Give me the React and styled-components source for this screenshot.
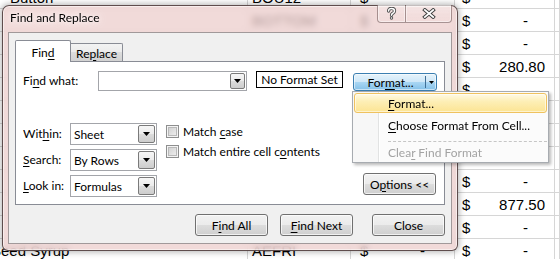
import React from 'react';
import styled, { createGlobalStyle, css } from 'styled-components';

const GlobalStyle = createGlobalStyle`
  html, body { margin: 0; padding: 0; background: #ffffff; }
  body { overflow: hidden; }
  *, *::before, *::after { box-sizing: border-box; }
`;

const UI_FONT = `Lato, "Liberation Sans", Arial, sans-serif`;

const Page = styled.div`
  position: relative;
  width: 560px;
  height: 259px;
  overflow: hidden;
  background: #fff;
`;

/* ---------- spreadsheet behind the dialog ---------- */
const Sheet = styled.div`
  display: flex;
  flex-direction: column;
  margin-top: -14px;
  font-family: "Liberation Sans", Arial, sans-serif;
  font-size: 15px;
  color: #000;
`;

const SheetRow = styled.div`
  flex: none;
  display: grid;
  grid-template-columns: 248px 103px 104px 100px 1fr;
  height: 23px;
  border-bottom: 1px solid #d6d6d6;
`;

const Cell = styled.div`
  display: flex;
  align-items: center;
  border-right: 1px solid #d6d6d6;
  padding-left: ${p => p.$pl ?? 4}px;
  white-space: nowrap;
  overflow: hidden;
`;

const ShiftedText = styled.span`
  margin-left: ${p => p.$shift}px;
`;

const MoneyCell = styled(Cell)`
  justify-content: space-between;
  padding-right: ${p => p.$pr}px;
`;

const Amount = styled.span`
  padding-right: ${p => (p.$dash ? 17 : 0)}px;
`;

/* ---------- dialog window ---------- */
const Window = styled.div`
  position: absolute;
  left: 2px;
  top: 5px;
  width: 456px;
  height: 246px;
  display: flex;
  flex-direction: column;
  padding: 0 5px 6px;
  border: 1px solid rgba(55, 38, 38, 0.78);
  border-radius: 7px 7px 6px 6px;
  background: rgba(236, 205, 204, 0.74);
  backdrop-filter: blur(3px);
  box-shadow: inset 0 0 0 1px rgba(255, 255, 255, 0.5), 0 0 6px 1px rgba(0, 0, 0, 0.3);
  font-family: ${UI_FONT};
  font-size: 12px;
  color: #000;
`;

const TitleBar = styled.div`
  flex: none;
  height: 26px;
  display: flex;
  justify-content: space-between;
  align-items: flex-start;
  padding-left: 2px;
`;

const Title = styled.div`
  margin-top: 4px;
  line-height: 15px;
  font-size: 12px;
  text-shadow: 0 0 5px rgba(255, 255, 255, 0.9), 0 0 8px rgba(255, 255, 255, 0.8);
`;

const CaptionGroup = styled.div`
  display: flex;
  margin-top: -1px;
`;

const CaptionButton = styled.div`
  width: ${p => p.$w}px;
  height: 18px;
  display: flex;
  align-items: center;
  justify-content: center;
  border: 1px solid rgba(90, 65, 65, 0.5);
  border-top: none;
  background: linear-gradient(rgba(255, 255, 255, 0.35), rgba(255, 255, 255, 0.12) 55%, rgba(255, 255, 255, 0.05));
  box-shadow: inset 0 0 0 1px rgba(255, 255, 255, 0.45);
  ${p => p.$first
    ? css`border-right: none; border-radius: 0 0 0 4px;`
    : css`border-radius: 0 0 4px 0;`}
`;

const ClientArea = styled.div`
  flex: none;
  height: 212px;
  display: flex;
  flex-direction: column;
  padding: 7px 6px 0;
  border: 1px solid #a1999a;
  background: #f0f0f0;
`;

const TabStrip = styled.div`
  flex: none;
  height: 21px;
  display: flex;
  align-items: flex-end;
`;

const Tab = styled.div`
  flex: none;
  display: flex;
  align-items: center;
  justify-content: center;
  border: 1px solid #898c95;
  border-bottom: none;
  ${p => p.$active
    ? css`
        width: 56px;
        height: 22px;
        margin-bottom: -1px;
        padding-top: 1px;
        background: #fff;
        position: relative;
        z-index: 1;
        border-radius: 2px 2px 0 0;
      `
    : css`
        width: 52px;
        height: 18px;
        padding-top: 1px;
        border-left: none;
        border-radius: 0 2px 0 0;
        background: linear-gradient(#f3f3f3, #ebebeb 50%, #dddddd 50%, #d2d2d2);
      `}
`;

const Panel = styled.div`
  flex: none;
  height: 144px;
  display: flex;
  flex-direction: column;
  padding: 9px 0 7px 7px;
  border: 1px solid #898c95;
  background: #fff;
`;

const FindRow = styled.div`
  flex: none;
  display: flex;
  align-items: flex-start;
`;

const Label = styled.div`
  flex: none;
  width: ${p => p.$w}px;
  line-height: ${p => p.$h}px;
  white-space: nowrap;
`;

const Text = styled.span`
  white-space: pre;
`;

const Key = styled.span`
  text-decoration: underline;
  text-underline-offset: 2px;
`;

const Combo = styled.div`
  flex: none;
  width: ${p => p.$w}px;
  height: ${p => p.$h}px;
  display: flex;
  align-items: stretch;
  padding: 1px;
  border: 1px solid #a3a5aa;
  background: #fff;
`;

const ComboValue = styled.div`
  flex: 1;
  display: flex;
  align-items: center;
  padding-left: 2px;
  white-space: nowrap;
`;

const DropButton = styled.div`
  flex: none;
  width: ${p => p.$w}px;
  display: flex;
  align-items: center;
  justify-content: center;
  border: 1px solid #7a7a7a;
  border-radius: 2px;
  background: linear-gradient(#f6f6f6, #ebebeb 50%, #dcdcdc 50%, #cdcdcd);
`;

const FormatBox = styled.div`
  flex: none;
  width: 87px;
  height: 17px;
  margin-left: 9px;
  display: flex;
  align-items: center;
  justify-content: center;
  border: 1px solid #000;
  background: #fff;
  white-space: nowrap;
`;

const SplitButton = styled.div`
  flex: none;
  width: 84px;
  height: 18px;
  margin-left: 10px;
  margin-top: 2px;
  display: flex;
  border: 1px solid #3c7fb1;
  border-radius: 3px;
  background: linear-gradient(#e6f3fb 0%, #cfe8f8 48%, #a9d6f3 52%, #84c1e9 100%);
  box-shadow: inset 0 0 0 1px rgba(255, 255, 255, 0.55);
`;

const SplitMain = styled.div`
  flex: 1;
  display: flex;
  align-items: center;
  justify-content: center;
  padding-left: 2px;
`;

const SplitDivider = styled.div`
  flex: none;
  width: 1px;
  margin: 2px 0;
  background: #3f6f95;
`;

const SplitArrow = styled.div`
  flex: none;
  width: 10px;
  display: flex;
  align-items: center;
  justify-content: center;
`;

const Lower = styled.div`
  margin-top: auto;
  display: flex;
  align-items: flex-end;
`;

const SelectColumn = styled.div`
  display: flex;
  flex-direction: column;
  gap: 4px;
`;

const FieldRow = styled.div`
  display: flex;
  align-items: center;
  height: 22px;
`;

const CheckColumn = styled.div`
  align-self: flex-start;
  margin-top: 2px;
  margin-left: 9px;
  display: flex;
  flex-direction: column;
  gap: 7px;
`;

const CheckRow = styled.div`
  display: flex;
  align-items: center;
  gap: 4px;
  height: 13px;
  white-space: nowrap;
`;

const CheckBox = styled.span`
  flex: none;
  width: 13px;
  height: 13px;
  border: 1px solid #8e8f8f;
  background: linear-gradient(135deg, #cbcbcb, #f4f4f4);
  box-shadow: inset 0 0 0 1px #f4f4f4, inset 0 0 0 2px #b9b9b9;
`;

const PushButton = styled.div`
  flex: none;
  width: ${p => p.$w ?? 73}px;
  height: 22px;
  display: flex;
  align-items: center;
  justify-content: center;
  border: 1px solid #707070;
  border-radius: 3px;
  background: linear-gradient(#f2f2f2 0%, #ebebeb 50%, #dddddd 50%, #cfcfcf 100%);
  box-shadow: inset 0 0 0 1px rgba(255, 255, 255, 0.7);
  white-space: nowrap;
`;

const OptionsButton = styled(PushButton)`
  margin-left: auto;
  margin-right: 8px;
  margin-bottom: 2px;
`;

const ButtonRow = styled.div`
  flex: none;
  margin-top: 9px;
  display: flex;
  justify-content: flex-end;
`;

const Gap = styled.div`
  flex: none;
  width: ${p => p.$w}px;
`;

/* ---------- dropdown menu ---------- */
const Menu = styled.div`
  position: absolute;
  left: 352px;
  top: 91px;
  width: 197px;
  height: 72px;
  display: flex;
  flex-direction: column;
  padding-bottom: 1px;
  border: 1px solid #a7abb0;
  background: linear-gradient(to right, #f7f7f7 25px, #e2e3e3 25px, #e2e3e3 26px, #ffffff 26px, #ffffff 27px, #fbfbfb 27px);
  box-shadow: 2px 2px 3px rgba(0, 0, 0, 0.28);
  font-family: ${UI_FONT};
  font-size: 12px;
`;

const MenuItem = styled.div`
  flex: none;
  height: ${p => p.$h}px;
  margin: ${p => p.$m};
  padding-left: 33px;
  display: flex;
  align-items: center;
  border: 1px solid transparent;
  border-radius: 3px;
  white-space: nowrap;
  color: ${p => (p.$disabled ? '#a3a3a3' : '#000')};
  ${p => p.$hot && css`
    border-color: #efc25f;
    background: linear-gradient(#fffae6 0%, #fdefb7 40%, #fce493 100%);
    box-shadow: inset 0 0 0 1px rgba(255, 255, 255, 0.55);
  `}
`;

const MenuSeparator = styled.div`
  flex: none;
  height: 6px;
  margin: 0 1px 0 35px;
  border-bottom: 1px dashed #c6c6c6;
`;

/* ---------- icons ---------- */
const DownTriangle = ({ w = 7, h = 4 }) => (
  <svg width={w} height={h} viewBox={`0 0 ${w} ${h}`}>
    <polygon points={`0,0 ${w},0 ${w / 2},${h}`} fill="#000" />
  </svg>
);

const HelpGlyph = () => (
  <svg width="11" height="13" viewBox="0 0 11 13">
    <g fill="none" strokeLinecap="round" strokeLinejoin="round">
      <path d="M2.6 4.1 C2.6 2.2 3.8 1.4 5.5 1.4 C7.3 1.4 8.5 2.4 8.5 3.9 C8.5 5.3 7.4 5.9 6.5 6.5 C5.8 6.9 5.5 7.4 5.5 8.2" stroke="#4d4d4d" strokeWidth="3.3" />
      <path d="M2.6 4.1 C2.6 2.2 3.8 1.4 5.5 1.4 C7.3 1.4 8.5 2.4 8.5 3.9 C8.5 5.3 7.4 5.9 6.5 6.5 C5.8 6.9 5.5 7.4 5.5 8.2" stroke="#ffffff" strokeWidth="1.5" />
    </g>
    <circle cx="5.5" cy="11" r="1.7" fill="#4d4d4d" />
    <circle cx="5.5" cy="11" r="0.8" fill="#ffffff" />
  </svg>
);

const CloseGlyph = () => (
  <svg width="14" height="11" viewBox="0 0 14 11">
    <g strokeLinecap="square">
      <path d="M2.8 2 L11.2 9 M11.2 2 L2.8 9" stroke="#404040" strokeWidth="3.6" />
      <path d="M2.8 2 L11.2 9 M11.2 2 L2.8 9" stroke="#ffffff" strokeWidth="1.7" />
    </g>
  </svg>
);

/* ---------- data ---------- */
const rows = [
  { a: 'Button', aPl: 10, b: 'BOU12', c: ['$', ''], d: ['$', '-'] },
  { b: 'BOTTOM', c: ['$', ''], d: ['$', '-'] },
  { d: ['$', '-'] },
  { d: ['$', '280.80'] },
  { d: ['$', ''] },
  {},
  {},
  {},
  { d: ['$', '-'] },
  { d: ['$', '877.50'] },
  { d: ['$', '-'] },
  { a: 'Seed Syrup', aShift: -9, b: 'AEFRI', c: ['$', '-'], d: ['$', '-'] },
];

function SheetBackground() {
  return (
    <Sheet>
      {rows.map((r, i) => (
        <SheetRow key={i}>
          <Cell $pl={r.aPl ?? 0}>
            {r.a && <ShiftedText $shift={r.aShift ?? 0}>{r.a}</ShiftedText>}
          </Cell>
          <Cell $pl={4}>{r.b}</Cell>
          <MoneyCell $pl={9} $pr={12}>
            {r.c && <span>{r.c[0]}</span>}
            {r.c && <Amount $dash={r.c[1] === '-'}>{r.c[1]}</Amount>}
          </MoneyCell>
          <MoneyCell $pl={7} $pr={9}>
            {r.d && <span>{r.d[0]}</span>}
            {r.d && <Amount $dash={r.d[1] === '-'}>{r.d[1]}</Amount>}
          </MoneyCell>
          <Cell />
        </SheetRow>
      ))}
    </Sheet>
  );
}

function Select({ value }) {
  return (
    <Combo $w={87} $h={22}>
      <ComboValue>{value}</ComboValue>
      <DropButton $w={17}><DownTriangle /></DropButton>
    </Combo>
  );
}

export default function App() {
  return (
    <>
      <GlobalStyle />
      <Page>
        <SheetBackground />

        <Window>
          <TitleBar>
            <Title>Find and Replace</Title>
            <CaptionGroup>
              <CaptionButton $w={28} $first><HelpGlyph /></CaptionButton>
              <CaptionButton $w={47}><CloseGlyph /></CaptionButton>
            </CaptionGroup>
          </TitleBar>

          <ClientArea>
            <TabStrip>
              <Tab $active><Text>Fin<Key>d</Key></Text></Tab>
              <Tab><Text>Re<Key>p</Key>lace</Text></Tab>
            </TabStrip>

            <Panel>
              <FindRow>
                <Label $w={75} $h={20}>Fi<Key>n</Key>d what:</Label>
                <Combo $w={149} $h={20}>
                  <ComboValue />
                  <DropButton $w={15}><DownTriangle /></DropButton>
                </Combo>
                <FormatBox>No Format Set</FormatBox>
                <SplitButton>
                  <SplitMain><Text>For<Key>m</Key>at...</Text></SplitMain>
                  <SplitDivider />
                  <SplitArrow><DownTriangle w={5} h={3} /></SplitArrow>
                </SplitButton>
              </FindRow>

              <Lower>
                <SelectColumn>
                  <FieldRow>
                    <Label $w={47} $h={22}>Wit<Key>h</Key>in:</Label>
                    <Select value="Sheet" />
                  </FieldRow>
                  <FieldRow>
                    <Label $w={47} $h={22}><Key>S</Key>earch:</Label>
                    <Select value="By Rows" />
                  </FieldRow>
                  <FieldRow>
                    <Label $w={47} $h={22}><Key>L</Key>ook in:</Label>
                    <Select value="Formulas" />
                  </FieldRow>
                </SelectColumn>

                <CheckColumn>
                  <CheckRow><CheckBox /><Text>Match <Key>c</Key>ase</Text></CheckRow>
                  <CheckRow><CheckBox /><Text>Match entire cell c<Key>o</Key>ntents</Text></CheckRow>
                </CheckColumn>

                <OptionsButton><Text>O<Key>p</Key>tions &lt;&lt;</Text></OptionsButton>
              </Lower>
            </Panel>

            <ButtonRow>
              <PushButton><Text>F<Key>i</Key>nd All</Text></PushButton>
              <Gap $w={12} />
              <PushButton><Text><Key>F</Key>ind Next</Text></PushButton>
              <Gap $w={19} />
              <PushButton><Text>Close</Text></PushButton>
            </ButtonRow>
          </ClientArea>
        </Window>

        <Menu>
          <MenuItem $h={20} $m="1px 1px" $hot><Text><Key>F</Key>ormat...</Text></MenuItem>
          <MenuItem $h={20} $m="1px 1px"><Text><Key>C</Key>hoose Format From Cell...</Text></MenuItem>
          <MenuSeparator />
          <MenuItem $h={18} $m="1px 1px 0" $disabled><Text>Clea<Key>r</Key> Find Format</Text></MenuItem>
        </Menu>
      </Page>
    </>
  );
}
